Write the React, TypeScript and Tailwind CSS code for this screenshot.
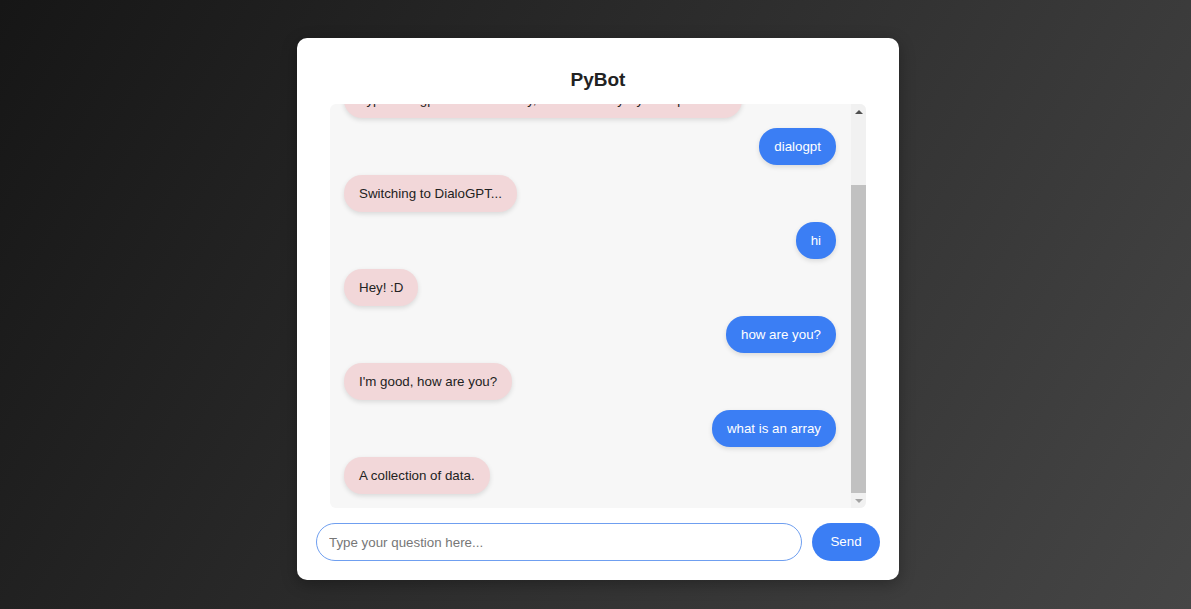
import { useEffect, useRef } from 'react'

type Msg = { from: 'user' | 'bot'; text: string }

const messages: Msg[] = [
  { from: 'user', text: 'help' },
  { from: 'bot', text: 'Type dialogpt to chat casually, or ask me any Python question.' },
  { from: 'user', text: 'dialogpt' },
  { from: 'bot', text: 'Switching to DialoGPT...' },
  { from: 'user', text: 'hi' },
  { from: 'bot', text: 'Hey! :D' },
  { from: 'user', text: 'how are you?' },
  { from: 'bot', text: "I'm good, how are you?" },
  { from: 'user', text: 'what is an array' },
  { from: 'bot', text: 'A collection of data.' },
]

function Bubble({ msg }: { msg: Msg }) {
  const isUser = msg.from === 'user'
  return (
    <div className={isUser ? 'flex justify-end' : 'flex justify-start'}>
      <div
        className={`whitespace-nowrap rounded-[18px] px-[15px] py-[10px] text-[13.33px] leading-[17px] shadow-[0_2px_5px_rgba(0,0,0,0.12)] ${
          isUser ? 'bg-[#3b7ef4] text-white' : 'bg-[#f2d7d9] text-[#222]'
        }`}
      >
        {msg.text}
      </div>
    </div>
  )
}

// classic scrollbar, drawn since the headless browser hides real ones
function ScrollBar() {
  return (
    <div className="flex w-[15px] shrink-0 flex-col bg-[#f1f1f1]">
      <div className="flex h-[15px] items-center justify-center">
        <svg width="8" height="4" viewBox="0 0 8 4">
          <path d="M0 4 L4 0 L8 4 Z" fill="#505050" />
        </svg>
      </div>
      <div className="flex flex-1 flex-col justify-end">
        <div className="h-[308px] bg-[#c1c1c1]" />
      </div>
      <div className="flex h-[15px] items-center justify-center">
        <svg width="8" height="4" viewBox="0 0 8 4">
          <path d="M0 0 L8 0 L4 4 Z" fill="#a3a3a3" />
        </svg>
      </div>
    </div>
  )
}

export default function App() {
  const listRef = useRef<HTMLDivElement>(null)

  useEffect(() => {
    if (listRef.current) listRef.current.scrollTop = listRef.current.scrollHeight
  }, [])

  return (
    <div
      className="min-h-[609px] w-full bg-[linear-gradient(120deg,#161616,#464646)] pt-[38px] pl-[5px] flex justify-center items-start"
      style={{ fontFamily: '"Liberation Sans", Arial, sans-serif' }}
    >
      <div className="w-[602px] rounded-[10px] bg-white px-[19px] pt-[27px] pb-[19px] shadow-[0_4px_16px_rgba(0,0,0,0.3)]">
        <h1 className="text-center text-[19px] font-bold leading-[28px] text-[#222] mb-[11px] translate-y-[1px]">PyBot</h1>

        {/* chat log */}
        <div className="mx-auto flex h-[404px] w-[536px] overflow-hidden rounded-[6px] bg-[#f7f7f7]">
          <div ref={listRef} className="flex flex-1 flex-col gap-[10px] overflow-hidden pl-[14px] pr-[15px] pt-[15px] pb-[14px]">
            {messages.map((m, i) => (
              <Bubble key={i} msg={m} />
            ))}
          </div>
          <ScrollBar />
        </div>

        {/* input row */}
        <div className="mt-[15px] flex items-center gap-[10px]">
          <input
            type="text"
            placeholder="Type your question here..."
            className="h-[38px] flex-1 rounded-full border border-[#6f9ff0] bg-white px-[12px] text-[13.33px] text-[#222] placeholder:text-[#777] outline-none"
          />
          <button className="h-[38px] w-[68px] rounded-full bg-[#3b7ef4] text-[13.33px] text-white">Send</button>
        </div>
      </div>
    </div>
  )
}
